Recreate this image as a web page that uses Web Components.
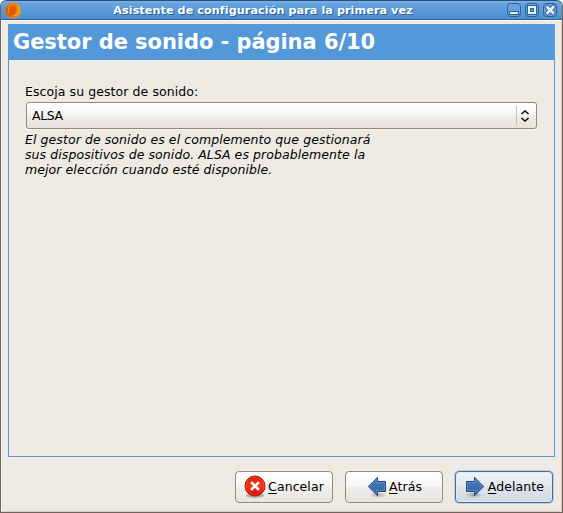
<!DOCTYPE html>
<html lang="es"><head><meta charset="utf-8"><title>Asistente</title>
<style>html,body{margin:0;height:100%;overflow:hidden;background:#fff}body{font:12.5px/15px "DejaVu Sans",sans-serif;color:#000;letter-spacing:.08px}</style></head>
<body>
<wizard-window>
<title-bar slot="title">Asistente de configuración para la primera vez</title-bar>
<wizard-page heading="Gestor de sonido - página 6/10">
<combo-field label="Escoja su gestor de sonido:" value="ALSA"></combo-field>
<hint-text>El gestor de sonido es el complemento que gestionará<br>sus dispositivos de sonido. ALSA es probablemente la<br>mejor elección cuando esté disponible.</hint-text>
</wizard-page>
<push-button slot="actions" icon="cancel"><u>C</u>ancelar</push-button>
<push-button slot="actions" icon="back"><u>A</u>trás</push-button>
<push-button slot="actions" icon="next" primary><u>A</u>delante</push-button>
</wizard-window>
<script>
const define=(name,render)=>customElements.define(name,class extends HTMLElement{
  connectedCallback(){ if(!this.shadowRoot) this.attachShadow({mode:'open'}).innerHTML=render(this); }
});

define('wizard-window',()=>`<style>
:host{display:flex;flex-direction:column;box-sizing:border-box;width:563px;height:513px;background:#edeae3;border:1px solid #706357;border-top:0;border-radius:6px 6px 0 0;overflow:hidden}
.title{margin:0 -1px;flex:none}
.body{flex:1;box-sizing:border-box;display:flex;flex-direction:column;border:1px solid #fcfbf8;border-right-color:#d4cdc0;border-bottom-color:#d4cdc0;padding:3px 6px 8px}
.actions{display:flex;justify-content:flex-end;gap:12px;padding:14px 2px 0 0}
</style><div class="title"><slot name="title"></slot></div>
<div class="body"><slot></slot><div class="actions"><slot name="actions"></slot></div></div>`);

define('title-bar',()=>`<style>
:host{display:flex;align-items:center;box-sizing:border-box;height:20px;padding:0 5px;background:linear-gradient(#79b1e8,#66a3de 15%,#4b8fd2);border:1px solid #2f5f93;border-top-color:#2b4f76;border-radius:6px 6px 0 0;color:#fff;font-weight:bold;font-size:11.2px;line-height:14px;text-shadow:1px 1px 0 #2d5b8b}
.t{flex:1;text-align:center;white-space:nowrap;padding:1px 3px 0 0}
svg{flex:none;display:block}
.app{margin-left:-1px}
</style>
<svg class="app" width="17" height="17" viewBox="0 0 17 17"><defs><radialGradient id="g" cx=".35" cy=".5" r=".65"><stop offset="0" stop-color="#cc3e08"/><stop offset=".5" stop-color="#e56405"/><stop offset="1" stop-color="#f4a000"/></radialGradient></defs>
<circle cx="8" cy="8.500" r="7.900" fill="url(#g)"/><path d="M8 1.200C3 2.500 1.500 8 3.500 12.500c1-2.500 1-5 .8-7C5.500 4 6.500 2.500 9 2z" fill="#f48a0c"/><path d="M10.500 3c3 1.500 3 7-1 10l-2.500.8c4.500 1.200 8-2 8-5.800S13 3 10.500 3z" fill="#f59c08"/><path d="M5.500 4.500c2-1.500 5-.5 5.500 1.500L9.500 9 5.500 11.500c-1-2-1-5 0-7z" fill="#dc5a07"/></svg>
<div class="t"><slot></slot></div>
<svg width="51" height="16" viewBox="0 0 51 16" style="margin-right:-1px">
<g fill="#67a4dd" stroke="#2e5f93"><rect x=".5" y="1.500" width="13" height="13" rx="3"/><rect x="18.500" y="1.500" width="13" height="13" rx="3"/><rect x="36.500" y="1.500" width="13" height="13" rx="3"/></g>
<rect x="2.500" y="9.500" width="9" height="3" fill="#e5f0fa" stroke="#2e5f93"/>
<rect x="22" y="5" width="6" height="6" fill="none" stroke="#2e5f93" stroke-width="4"/><rect x="22" y="5" width="6" height="6" fill="none" stroke="#e5f0fa" stroke-width="2"/>
<path d="M40.500 5.200l5.500 5.600M46 5.200l-5.500 5.600" stroke="#2e5f93" stroke-width="4.500" stroke-linecap="square"/><path d="M40.500 5.200l5.500 5.600M46 5.200l-5.500 5.600" stroke="#eaf3fb" stroke-width="2.700" stroke-linecap="square"/>
</svg>`);

define('wizard-page',e=>`<style>
:host{display:flex;flex-direction:column;box-sizing:border-box;height:433px;border:1px solid #5398d8}
h1{margin:-1px -1px 0;padding:0 6px 0 5px;height:36px;background:#5398d8;color:#fff;font:bold 21px/36px "DejaVu Sans",sans-serif;letter-spacing:-.06px;white-space:nowrap}
.content{padding:24px 17px 0 16px}
</style><h1>${e.getAttribute('heading')}</h1><div class="content"><slot></slot></div>`);

define('combo-field',e=>`<style>
:host{display:block}
.label{height:18px;line-height:15px}
.box{display:flex;align-items:center;box-sizing:border-box;height:27px;margin-left:1px;border:1px solid #93887a;border-radius:3px;background:linear-gradient(#fff,#f6f5f2 50%,#eeece7 55%,#e6e3dc);padding:0 7px 0 5px;box-shadow:0 1px 0 #f5f2ed}
.value{flex:1;letter-spacing:-.4px}
.sep{width:1px;height:19px;background:#cbbfaf;margin-right:4px}
</style><div class="label">${e.getAttribute('label')}</div><div class="box"><div class="value">${e.getAttribute('value')}</div><div class="sep"></div>
<svg width="8" height="12" viewBox="0 0 8 12"><path d="M1 4.200V3.500L4 1l3 2.500v.7M1 7.800v.7L4 11l3-2.500v-.7" fill="none" stroke="#111" stroke-width="1.600"/></svg></div>`);

define('hint-text',()=>`<style>:host{display:block;font-style:italic;padding-top:3px;white-space:nowrap;line-height:15px}</style><slot></slot>`);

const icons={
cancel:`<svg width="22" height="24" viewBox="0 0 22 24"><defs><linearGradient id="r" x2="0" y2="1"><stop stop-color="#e31908"/><stop offset=".5" stop-color="#f03a14"/><stop offset="1" stop-color="#d40808"/></linearGradient></defs><ellipse cx="11" cy="20.500" rx="9" ry="2.500" fill="#000" opacity=".25"/><circle cx="11" cy="11" r="10" fill="url(#r)" stroke="#b00c08"/><circle cx="11" cy="11" r="9" fill="none" stroke="#ff6a50" opacity=".4"/><path d="M8 8l6 6M14 8l-6 6" stroke="#fff" stroke-width="2.600" stroke-linecap="square"/></svg>`,
next:`<svg width="22" height="24" viewBox="0 0 22 24"><defs><radialGradient id="s"><stop stop-opacity=".3"/><stop offset="1" stop-opacity="0"/></radialGradient><linearGradient id="b" x2="0" y2="1"><stop stop-color="#4c7ebc"/><stop offset="1" stop-color="#2f62a5"/></linearGradient></defs><ellipse cx="10" cy="20" rx="9" ry="3" fill="url(#s)"/><path d="M2.500 6.500h8V2.300L19.700 11.500l-9.200 9.200v-4.200h-8z" fill="url(#b)" stroke="#204a87"/><path d="M3.500 7.500h8V4.600l6.800 6.900-6.800 6.800v-2.800h-8z" fill="none" stroke="#729fcf" opacity=".5"/></svg>`};
icons.back=icons.next.replace('<svg','<svg style="transform:scaleX(-1)"');

define('push-button',e=>`<style>
:host{display:flex;align-items:center;justify-content:center;box-sizing:border-box;width:98px;height:32px;border:1px solid #93887a;border-radius:4px;background:linear-gradient(#fff,#f8f7f5 45%,#f1efeb 50%,#e8e5df);white-space:nowrap;box-shadow:0 0 0 1px #efebe5}
:host([primary]){border-color:#456f97;background:linear-gradient(#eff2f5,#e5e9ed 45%,#dde2e8 50%,#d3dae2);box-shadow:inset 0 0 0 1px #dcebf5,0 0 0 1px #b5d1e5}
svg{display:block;flex:none;margin-right:2px}
span{display:block;padding-bottom:2px}
:host([icon=back]) svg{margin-right:1px}
::slotted(u){text-decoration-thickness:1px;text-underline-offset:2px}
</style>${icons[e.getAttribute('icon')]}<span><slot></slot></span>`);
</script></body></html>
